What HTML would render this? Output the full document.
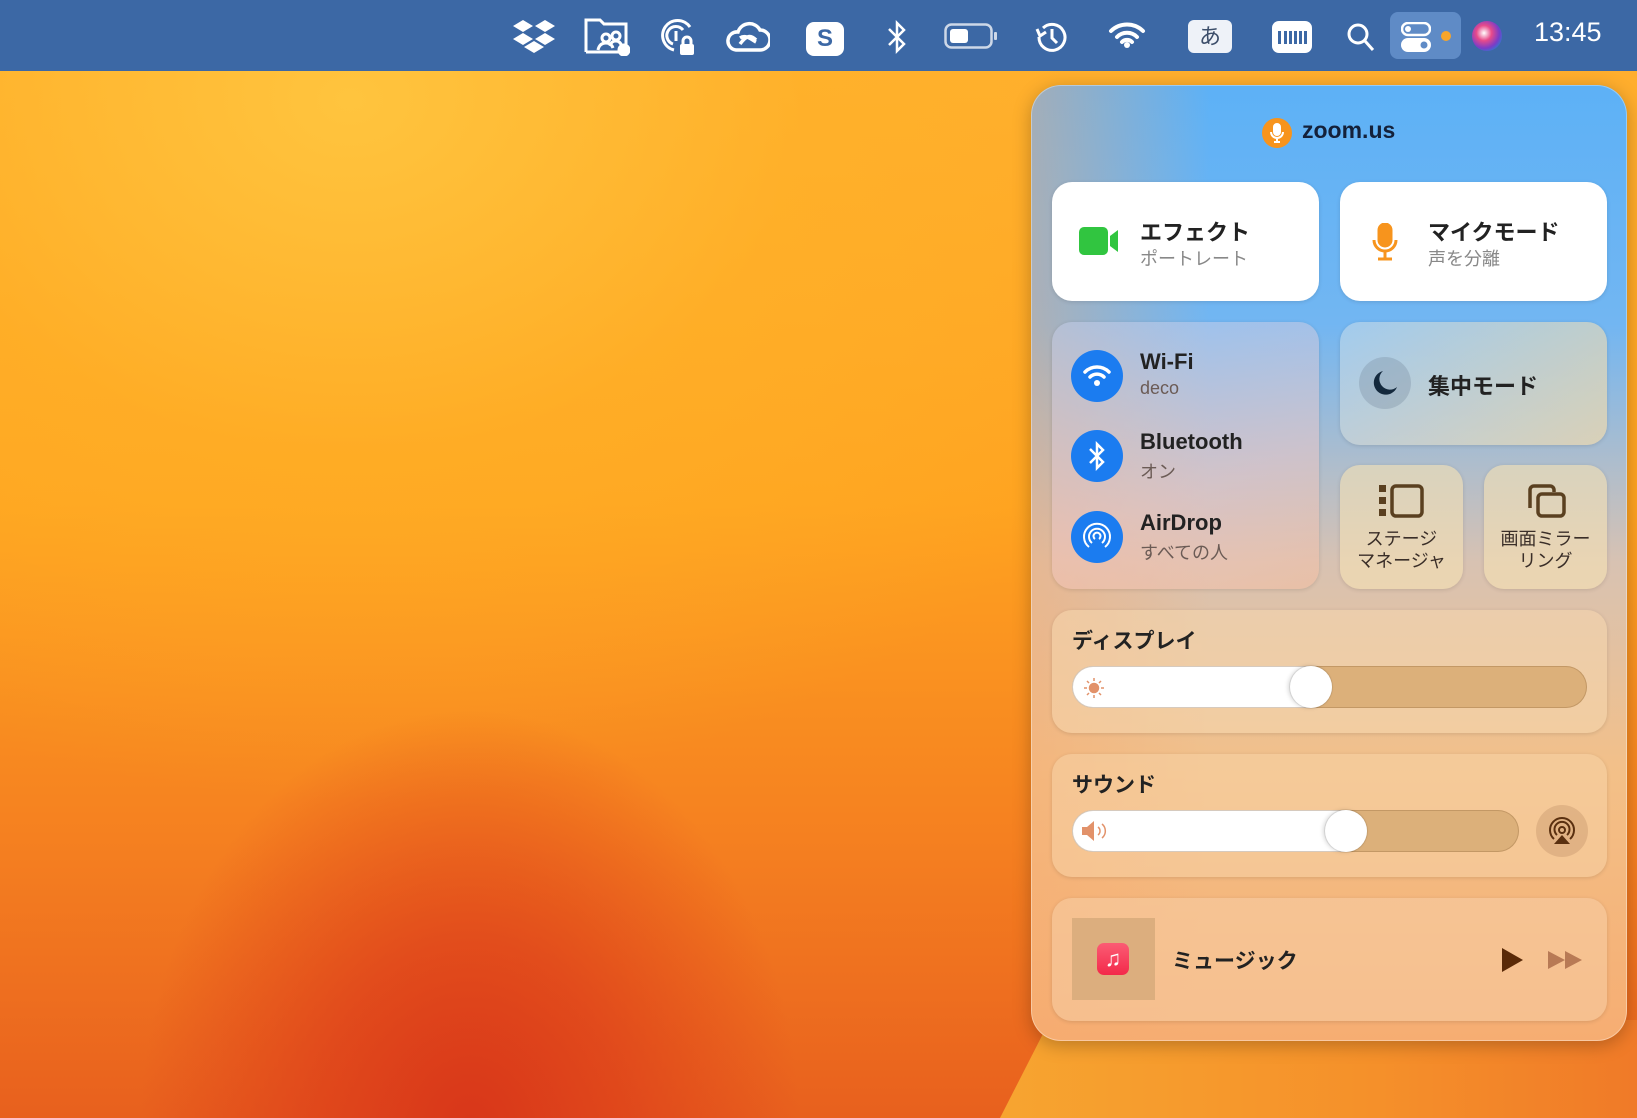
<!DOCTYPE html>
<html><head><meta charset="utf-8"><style>
*{margin:0;padding:0;box-sizing:border-box}
body{width:1637px;height:1118px;overflow:hidden;position:relative;font-family:"Liberation Sans","Noto Sans CJK JP",sans-serif;
background:
radial-gradient(ellipse 330px 420px at 470px 1130px,#d8361a 0%,rgba(220,60,26,0.7) 45%,rgba(230,80,20,0) 100%),
radial-gradient(ellipse 900px 700px at 350px 100px,#ffc43e 0%,rgba(255,180,40,0.5) 50%,rgba(255,160,30,0) 100%),
linear-gradient(180deg,#ffb030 0%,#ffa320 45%,#f58020 75%,#e8601e 100%);}
.bar{position:absolute;left:0;top:0;width:1637px;height:71px;background:#3c68a5}
.ab{position:absolute}
.panel{position:absolute;left:1031px;top:85px;width:596px;height:956px;border-radius:30px;
background:linear-gradient(90deg,rgba(246,170,110,0.45) 0%,rgba(246,170,110,0) 30%),linear-gradient(180deg,#5db1f6 0%,#72b6f2 25%,#d8c2b2 50%,#f3c088 72%,#f6ad72 100%);
box-shadow:0 0 0 1px rgba(255,255,255,0.35) inset,0 4px 18px rgba(0,0,0,0.25);overflow:hidden}
.tile{position:absolute;border-radius:20px;box-shadow:0 1px 4px rgba(0,0,0,0.12)}
.w{background:#fff}
.g{background:rgba(255,240,220,0.45)}
.t{position:absolute;font-weight:bold;font-size:22px;color:#222;white-space:nowrap}
.s{position:absolute;font-size:18px;color:#6b5b55;white-space:nowrap}
.circ{position:absolute;width:52px;height:52px;border-radius:50%;background:#1b7cf0}
</style></head><body>
<div class="ab" style="left:990px;top:1000px;width:647px;height:118px;clip-path:polygon(10px 118px,60px 20px,647px 20px,647px 118px);background:linear-gradient(90deg,#f7a530,#f5902a 60%,#f07a28)"></div>
<div class="bar"></div>
<svg class="ab" style="left:512px;top:18px" width="44" height="36" viewBox="0 0 44 36" fill="#fff"><path d="M11 2l10 6-10 6L1 8z M33 2l10 6-10 6-10-6z M11 15l10 6-10 6-10-6z M33 15l10 6-10 6-10-6z M22 23l10 6-10 6-10-6z"/></svg>
<svg class="ab" style="left:584px;top:16px" width="46" height="40" viewBox="0 0 46 40" fill="none" stroke="#fff" stroke-width="3"><path d="M2 36V4h14l4 4h22v26"/><path d="M2 36h34"/><circle cx="22" cy="22" r="4"/><circle cx="32" cy="20" r="4"/><path d="M14 34c1-5 4-7 8-7s6 2 7 5M26 30c1-4 3-5 6-5s5 2 6 6"/><circle cx="40" cy="34" r="5" fill="#fff"/></svg>
<svg class="ab" style="left:660px;top:17px" width="38" height="40" viewBox="0 0 38 40" fill="none" stroke="#fff" stroke-width="3"><path d="M30 10A15 15 0 1 0 14 33"/><path d="M23 13A9 9 0 1 0 13 27"/><path d="M16 14v10"/><rect x="20" y="27" width="14" height="11" rx="2" fill="#fff" stroke="none"/><path d="M23 27v-3a4 4 0 0 1 8 0v3"/></svg>
<svg class="ab" style="left:726px;top:20px" width="44" height="34" viewBox="0 0 44 34" fill="none" stroke="#fff" stroke-width="3.5"><path d="M10 30A9 9 0 0 1 12 12 12 12 0 0 1 34 10 10 10 0 0 1 34 30z"/><path d="M14 24c6-8 10-10 16-4M14 18c6-4 12 2 16 4"/></svg>
<div class="ab" style="left:806px;top:22px;width:38px;height:34px;border-radius:8px;background:#fff;color:#3c68a5;font-weight:bold;font-size:24px;text-align:center;line-height:34px">S</div>
<svg class="ab" style="left:886px;top:19px" width="22" height="36" viewBox="0 0 22 36" fill="none" stroke="#fff" stroke-width="2.5"><path d="M3 10l15 15-7 7V4l7 7-15 15"/></svg>
<svg class="ab" style="left:944px;top:23px" width="54" height="26" viewBox="0 0 54 26"><rect x="1.5" y="1.5" width="46" height="23" rx="6" fill="none" stroke="#cdd8e8" stroke-width="2.5"/><rect x="6" y="6" width="18" height="14" rx="3" fill="#fff"/><rect x="50" y="9" width="3" height="8" rx="1" fill="#cdd8e8"/></svg>
<svg class="ab" style="left:1034px;top:20px" width="34" height="34" viewBox="0 0 34 34" fill="none" stroke="#fff" stroke-width="3"><path d="M5 17A13 13 0 1 0 9 8"/><path d="M3 9l3 7 6-4"/><path d="M18 9v9l5 5"/></svg>
<svg class="ab" style="left:1108px;top:20px" width="38" height="32" viewBox="0 0 38 32" fill="none" stroke="#fff" stroke-width="4" stroke-linecap="round"><path d="M3 11a23 23 0 0 1 32 0M9 17a14 14 0 0 1 20 0"/><circle cx="19" cy="25" r="3" fill="#fff" stroke="none"/><path d="M14 22a7 7 0 0 1 10 0"/></svg>
<div class="ab" style="left:1188px;top:20px;width:44px;height:33px;border-radius:6px;background:#eef2f8;color:#3c4e6a;font-size:22px;text-align:center;line-height:33px">あ</div>
<svg class="ab" style="left:1272px;top:21px" width="40" height="32" viewBox="0 0 40 32"><rect x="0" y="0" width="40" height="32" rx="7" fill="#fff"/><g fill="#3c68a5"><rect x="6" y="10" width="3" height="13"/><rect x="12" y="10" width="3" height="13"/><rect x="17" y="10" width="3" height="13"/><rect x="22" y="10" width="3" height="13"/><rect x="27" y="10" width="3" height="13"/><rect x="32" y="10" width="3" height="13"/></g></svg>
<svg class="ab" style="left:1346px;top:21px" width="30" height="32" viewBox="0 0 30 32" fill="none" stroke="#fff" stroke-width="3"><circle cx="12" cy="13" r="9"/><path d="M19 20l8 9"/></svg>
<div class="ab" style="left:1390px;top:12px;width:71px;height:47px;border-radius:8px;background:#5f8bc6"></div>
<svg class="ab" style="left:1401px;top:22px" width="30" height="30" viewBox="0 0 30 30"><rect x="1" y="1" width="28" height="12" rx="6" fill="none" stroke="#fff" stroke-width="2.5"/><circle cx="7" cy="7" r="3" fill="#fff"/><rect x="0" y="16" width="30" height="14" rx="7" fill="#fff"/><circle cx="23" cy="23" r="3.5" fill="#5f8bc6"/></svg>
<div class="ab" style="left:1441px;top:31px;width:10px;height:10px;border-radius:50%;background:#f7a52a"></div>
<div class="ab" style="left:1472px;top:21px;width:30px;height:30px;border-radius:50%;background:radial-gradient(circle at 40% 40%,#fff 0%,#e84a8a 30%,#7a3cc8 60%,#1a8ad0 85%,#2a2a60 100%)"></div>
<div class="ab" style="left:1534px;top:17px;color:#fff;font-size:27px">13:45</div>

<div class="panel">
  <div class="ab" style="left:231px;top:33px;width:30px;height:30px;border-radius:50%;background:#f7941d"></div>
  <svg class="ab" style="left:238px;top:38px" width="16" height="20" viewBox="0 0 16 20" fill="none" stroke="#fff" stroke-width="2"><rect x="5" y="1" width="6" height="11" rx="3" fill="#fff"/><path d="M2 9a6 6 0 0 0 12 0M8 15v4M5 19h6"/></svg>
  <div class="ab" style="left:271px;top:32px;font-size:23px;font-weight:bold;color:#14213a">zoom.us</div>

  <div class="tile w" style="left:21px;top:97px;width:267px;height:119px"></div>
  <svg class="ab" style="left:48px;top:142px" width="40" height="28" viewBox="0 0 40 28"><rect x="0" y="0" width="29" height="28" rx="5" fill="#31c540"/><path d="M31 9l8-6v22l-8-6z" fill="#31c540"/></svg>
  <div class="t" style="left:109px;top:130px">エフェクト</div>
  <div class="s" style="left:109px;top:160px;color:#888">ポートレート</div>

  <div class="tile w" style="left:309px;top:97px;width:267px;height:119px"></div>
  <svg class="ab" style="left:341px;top:138px" width="26" height="38" viewBox="0 0 26 38" fill="none" stroke="#f7941d" stroke-width="3"><rect x="7" y="1" width="12" height="22" rx="6" fill="#f7941d"/><path d="M2 17a11 11 0 0 0 22 0M13 28v8M6 36h14"/></svg>
  <div class="t" style="left:397px;top:130px">マイクモード</div>
  <div class="s" style="left:397px;top:160px;color:#888">声を分離</div>

  <div class="tile g" style="left:21px;top:237px;width:267px;height:267px;background:linear-gradient(160deg,rgba(200,210,240,0.45),rgba(240,200,200,0.5) 60%,rgba(245,190,160,0.5))"></div>
  <div class="circ" style="left:40px;top:265px"></div>
  <svg class="ab" style="left:51px;top:279px" width="30" height="24" viewBox="0 0 30 24" fill="none" stroke="#fff" stroke-width="3.5" stroke-linecap="round"><path d="M3 8a17 17 0 0 1 24 0M8 13a10 10 0 0 1 14 0"/><circle cx="15" cy="19" r="3" fill="#fff" stroke="none"/></svg>
  <div class="t" style="left:109px;top:264px">Wi-Fi</div>
  <div class="s" style="left:109px;top:293px">deco</div>
  <div class="circ" style="left:40px;top:345px"></div>
  <svg class="ab" style="left:57px;top:356px" width="18" height="30" viewBox="0 0 18 30" fill="none" stroke="#fff" stroke-width="2.5"><path d="M2 8l13 13-6 6V3l6 6L2 22"/></svg>
  <div class="t" style="left:109px;top:344px">Bluetooth</div>
  <div class="s" style="left:109px;top:373px">オン</div>
  <div class="circ" style="left:40px;top:426px"></div>
  <svg class="ab" style="left:50px;top:436px" width="32" height="32" viewBox="0 0 32 32" fill="none" stroke="#fff" stroke-width="2"><path d="M8 26A13 13 0 1 1 24 26"/><path d="M11 22A8 8 0 1 1 21 22"/><path d="M14 18A3.5 3.5 0 1 1 18 18"/></svg>
  <div class="t" style="left:109px;top:425px">AirDrop</div>
  <div class="s" style="left:109px;top:454px">すべての人</div>

  <div class="tile g" style="left:309px;top:237px;width:267px;height:123px;background:linear-gradient(120deg,rgba(200,220,235,0.55),rgba(245,220,170,0.65))"></div>
  <div class="ab" style="left:328px;top:272px;width:52px;height:52px;border-radius:50%;background:rgba(120,140,160,0.35)"></div>
  <svg class="ab" style="left:341px;top:285px" width="26" height="26" viewBox="0 0 26 26"><path d="M11 1A12 12 0 1 0 25 17 10 10 0 0 1 11 1z" fill="#14293d"/></svg>
  <div class="t" style="left:397px;top:284px">集中モード</div>

  <div class="tile g" style="left:309px;top:380px;width:123px;height:124px;background:rgba(245,225,180,0.6)"></div>
  <svg class="ab" style="left:348px;top:399px" width="46" height="34" viewBox="0 0 46 34"><g fill="#5a4020"><rect x="0" y="1" width="7" height="7"/><rect x="0" y="13" width="7" height="7"/><rect x="0" y="25" width="7" height="7"/></g><rect x="13" y="2" width="30" height="30" rx="4" fill="none" stroke="#5a4020" stroke-width="3.5"/></svg>
  <div class="ab" style="left:309px;top:443px;width:123px;text-align:center;font-size:18px;line-height:22px;color:#3a2e28">ステージ<br>マネージャ</div>
  <div class="tile g" style="left:453px;top:380px;width:123px;height:124px;background:rgba(245,225,180,0.6)"></div>
  <svg class="ab" style="left:497px;top:399px" width="38" height="34" viewBox="0 0 38 34" fill="none" stroke="#5a4020" stroke-width="3.5"><path d="M2 24V6a4 4 0 0 1 4-4h16a4 4 0 0 1 4 4v2"/><rect x="10" y="10" width="26" height="22" rx="4"/></svg>
  <div class="ab" style="left:453px;top:443px;width:123px;text-align:center;font-size:18px;line-height:22px;color:#3a2e28">画面ミラー<br>リング</div>

  <div class="tile g" style="left:21px;top:525px;width:555px;height:123px;background:rgba(245,215,175,0.55)"></div>
  <div class="t" style="left:41px;top:540px;font-size:21px">ディスプレイ</div>
  <div class="ab" style="left:41px;top:581px;width:515px;height:42px;border-radius:21px;background:#dcb07a;box-shadow:inset 0 0 0 1px rgba(120,80,40,0.25)"></div>
  <div class="ab" style="left:41px;top:581px;width:260px;height:42px;border-radius:21px;background:#fff;box-shadow:inset 0 0 0 1px rgba(120,80,40,0.3)"></div>
  <div class="ab" style="left:259px;top:581px;width:42px;height:42px;border-radius:50%;background:#fff;box-shadow:-2px 0 4px rgba(0,0,0,0.15),0 0 0 1px rgba(0,0,0,0.08)"></div>
  <svg class="ab" style="left:52px;top:592px" width="22" height="22" viewBox="0 0 22 22" stroke="#e2926a" stroke-width="1.5"><circle cx="11" cy="11" r="4.5" fill="#e2926a"/><path d="M11 1v3M11 18v3M1 11h3M18 11h3M4 4l2 2M16 16l2 2M4 18l2-2M16 6l2-2"/></svg>

  <div class="tile g" style="left:21px;top:669px;width:555px;height:123px;background:rgba(245,210,165,0.55)"></div>
  <div class="t" style="left:41px;top:684px;font-size:21px">サウンド</div>
  <div class="ab" style="left:41px;top:725px;width:447px;height:42px;border-radius:21px;background:#dcb07a;box-shadow:inset 0 0 0 1px rgba(120,80,40,0.25)"></div>
  <div class="ab" style="left:41px;top:725px;width:295px;height:42px;border-radius:21px;background:#fff;box-shadow:inset 0 0 0 1px rgba(120,80,40,0.3)"></div>
  <div class="ab" style="left:294px;top:725px;width:42px;height:42px;border-radius:50%;background:#fff;box-shadow:-2px 0 4px rgba(0,0,0,0.15),0 0 0 1px rgba(0,0,0,0.08)"></div>
  <svg class="ab" style="left:50px;top:735px" width="30" height="22" viewBox="0 0 30 22"><path d="M1 7h5l7-6v20l-7-6H1z" fill="#e2926a"/><path d="M17 7a5 5 0 0 1 0 8M21 4a9 9 0 0 1 0 14" fill="none" stroke="#e2926a" stroke-width="1.5"/></svg>
  <div class="ab" style="left:505px;top:720px;width:52px;height:52px;border-radius:50%;background:rgba(190,140,100,0.35)"></div>
  <svg class="ab" style="left:515px;top:730px" width="32" height="32" viewBox="0 0 32 32" fill="none" stroke="#5a3010" stroke-width="2"><path d="M8 24A12 12 0 1 1 24 24"/><path d="M11 20A7.5 7.5 0 1 1 21 20"/><circle cx="16" cy="15" r="3"/><path d="M8 29l8-9 8 9z" fill="#5a3010" stroke="none"/></svg>

  <div class="tile g" style="left:21px;top:813px;width:555px;height:123px;background:rgba(245,205,165,0.55)"></div>
  <div class="ab" style="left:41px;top:833px;width:83px;height:82px;background:#dcae7e"></div>
  <div class="ab" style="left:66px;top:858px;width:32px;height:32px;border-radius:7px;background:linear-gradient(180deg,#fb5c74,#f3294a)"></div>
  <div class="ab" style="left:66px;top:858px;width:32px;height:32px;color:#fff;font-size:22px;text-align:center;line-height:32px">♫</div>
  <div class="t" style="left:141px;top:860px;font-size:21px">ミュージック</div>
  <svg class="ab" style="left:469px;top:862px" width="24" height="26" viewBox="0 0 24 26"><path d="M2 1l21 12L2 25z" fill="#5a2a08"/></svg>
  <svg class="ab" style="left:516px;top:865px" width="36" height="20" viewBox="0 0 36 20" fill="#b87a55"><path d="M1 1l17 9-17 9zM18 1l17 9-17 9z"/></svg>
</div>
</body></html>
